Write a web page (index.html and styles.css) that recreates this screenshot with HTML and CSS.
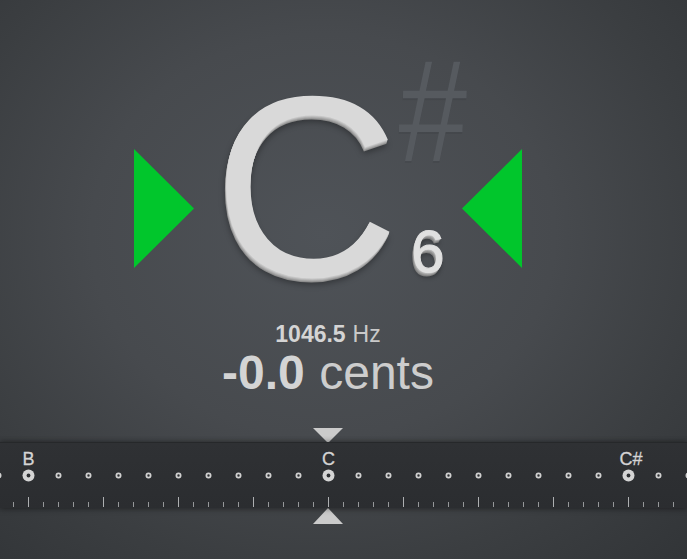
FILE: index.html
```html
<!DOCTYPE html>
<html>
<head>
<meta charset="utf-8">
<link rel="stylesheet" href="styles.css">
</head>
<body>
<div class="screen">
  <div class="display">
    <svg class="tri tri-left" width="60" height="119" viewBox="0 0 60 119"><polygon points="0,0 60,59.5 0,119" fill="#01c62c"/></svg>
    <div class="note">
      <span class="letter">C</span>
      <div class="side">
        <span class="sharp">#</span>
        <span class="octave">6</span>
      </div>
    </div>
    <svg class="tri tri-right" width="60" height="119" viewBox="0 0 60 119"><polygon points="60,0 0,59.5 60,119" fill="#01c62c"/></svg>
  </div>
  <div class="readout">
    <div class="hz"><b>1046.5</b><span class="unit">Hz</span></div>
    <div class="cents"><b>-0.0</b><span class="unit">cents</span></div>
  </div>
  <div class="meter">
    <div class="pointer-row">
      <svg width="30" height="15" viewBox="0 0 30 15"><polygon points="0,0 30,0 15,15" fill="#cbcbcb"/></svg>
    </div>
    <div class="band">
      <svg class="ruler" width="687" height="65" viewBox="0 0 687 65">
        <defs>
          <pattern id="shortTicks" x="13" y="0" width="15" height="65" patternUnits="userSpaceOnUse">
            <rect x="0" y="60" width="1" height="5" fill="#96989a"/>
          </pattern>
          <pattern id="longTicks" x="28" y="0" width="75" height="65" patternUnits="userSpaceOnUse">
            <rect x="0" y="55" width="1" height="10" fill="#aeb0b2"/>
          </pattern>
          <pattern id="dots" x="13" y="0" width="30" height="65" patternUnits="userSpaceOnUse">
            <circle cx="15.5" cy="33.5" r="2.1" fill="none" stroke="#d0d0d0" stroke-width="1.8"/>
          </pattern>
        </defs>
        <rect x="0" y="0" width="687" height="65" fill="url(#shortTicks)"/>
        <rect x="0" y="0" width="687" height="65" fill="url(#longTicks)"/>
        <rect x="0" y="0" width="687" height="65" fill="url(#dots)"/>
        <g class="big">
          <circle cx="28.5" cy="33.5" r="6" fill="#d4d4d4"/><circle cx="28.5" cy="33.5" r="1.9" fill="#2c2e31"/>
          <circle cx="328.5" cy="33.5" r="6" fill="#d4d4d4"/><circle cx="328.5" cy="33.5" r="1.9" fill="#2c2e31"/>
          <circle cx="628.5" cy="33.5" r="6" fill="#d4d4d4"/><circle cx="628.5" cy="33.5" r="1.9" fill="#2c2e31"/>
        </g>
        <text class="lbl" x="28.5" y="23" text-anchor="middle">B</text>
        <text class="lbl" x="328.5" y="23" text-anchor="middle">C</text>
        <text class="lbl" x="631" y="23" text-anchor="middle">C#</text>
      </svg>
    </div>
    <div class="pointer-row">
      <svg width="30" height="16" viewBox="0 0 30 16"><polygon points="15,0 30,16 0,16" fill="#cbcbcb"/></svg>
    </div>
  </div>
</div>
</body>
</html>
```

FILE: styles.css
```css
html, body {
  margin: 0;
  padding: 0;
}
body {
  width: 687px;
  height: 559px;
  overflow: hidden;
  font-family: "Liberation Sans", Arial, sans-serif;
  background: radial-gradient(ellipse 75% 80% at 47% 42%, #4f5358 0%, #474a4e 45%, #3b3e41 75%, #323538 100%);
}
.screen {
  display: flex;
  flex-direction: column;
}
.display {
  height: 323px;
  display: grid;
  grid-template-columns: 134px 60px 268px 60px 1fr;
  grid-template-rows: 323px;
}
.tri {
  display: block;
  grid-row: 1;
  align-self: start;
  margin-top: 149px;
  position: relative;
  z-index: 1;
}
.tri-left { grid-column: 2; }
.tri-right { grid-column: 4; }
.note {
  grid-column: 3 / 5;
  grid-row: 1;
  display: flex;
  align-items: flex-start;
  margin-left: 19px;
}
.letter {
  display: block;
  font-size: 258px;
  line-height: 258px;
  height: 258px;
  margin-top: 58px;
  color: #d9d9d9;
  text-shadow:
    -0.3px 1px 0 #c6c6c6,
    -0.6px 2px 0 #b4b4b4,
    -0.9px 3px 0 #a1a1a1,
    -1.2px 4px 0 #8c8c8c,
    -1px 6px 6px rgba(0, 0, 0, 0.35);
}
.side {
  display: flex;
  flex-direction: column;
  align-items: flex-start;
  margin-top: 39px;
  margin-left: 2px;
}
.sharp {
  display: block;
  font-size: 145px;
  line-height: 145px;
  height: 145px;
  color: #565a5f;
  transform: scaleX(0.84) skewX(-2deg);
  transform-origin: left top;
  text-shadow: 0 2px 0 rgba(0, 0, 0, 0.06);
}
.octave {
  display: block;
  font-size: 60px;
  line-height: 60px;
  height: 60px;
  margin-top: 38px;
  margin-left: 10px;
  color: #e0e0e0;
  -webkit-text-stroke: 1px #e0e0e0;
  text-shadow:
    -0.5px 1px 0 #c2c2c2,
    -1px 2px 0 #a9a9a9,
    -1.5px 3px 0 #929292,
    -2px 4px 0 #7e7e7e,
    -1px 5px 4px rgba(0, 0, 0, 0.35);
}
.readout {
  width: 656px;
  display: flex;
  flex-direction: column;
  align-items: center;
  color: #cfcfcf;
}
.unit {
  margin-left: 0.3em;
}
.hz {
  font-size: 23px;
  line-height: 23px;
  color: #c9c9c9;
}
.hz b {
  color: #d4d4d4;
}
.cents {
  margin-top: 3px;
  font-size: 48px;
  line-height: 48px;
  color: #cdcdcd;
}
.cents b {
  color: #d4d4d4;
}
.meter {
  margin-top: 31px;
  display: flex;
  flex-direction: column;
}
.pointer-row {
  width: 656px;
  display: flex;
  justify-content: center;
}
.pointer-row svg {
  display: block;
}
.band {
  height: 65px;
  background: linear-gradient(#2f3134, #2b2d30);
  border-top: 1px solid #26282a;
  margin-top: -1px;
  box-shadow: 0 1px 6px rgba(0, 0, 0, 0.35), 0 -1px 5px rgba(0, 0, 0, 0.2);
  position: relative;
}
.ruler {
  display: block;
  margin-top: -1px;
}
.lbl {
  font-family: "Liberation Sans", Arial, sans-serif;
  font-size: 18px;
  fill: #d4d4d4;
  stroke: #d4d4d4;
  stroke-width: 0.3px;
}
```
